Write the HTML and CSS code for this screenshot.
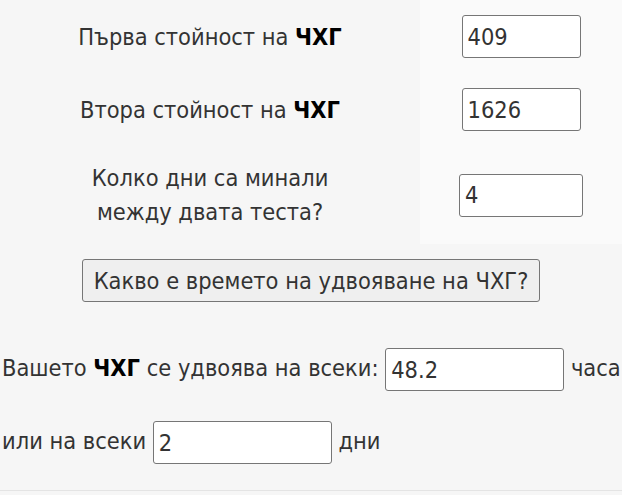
FILE: index.html
```html
<!DOCTYPE html>
<html lang="bg">
<head>
  <meta charset="UTF-8" />
  <title>Време на удвояване на ЧХГ</title>
  <link rel="stylesheet" href="styles.css">
</head>
<body>
  <div class="calc">
    <table class="inputs">
      <tr>
        <td class="label">Първа стойност на <b>ЧХГ</b></td>
        <td class="field"><input type="text" class="num" value="409"></td>
      </tr>
      <tr>
        <td class="label">Втора стойност на <b>ЧХГ</b></td>
        <td class="field"><input type="text" class="num" value="1626"></td>
      </tr>
      <tr>
        <td class="label">Колко дни са минали<br>между двата теста?</td>
        <td class="field"><input type="text" class="num wide" value="4"></td>
      </tr>
    </table>

    <div class="action">
      <button type="button">Какво е времето на удвояване на ЧХГ?</button>
    </div>

    <div class="result">
      <p>Вашето <b>ЧХГ</b> се удвоява на всеки: <input type="text" class="out" value="48.2"> часа</p>
      <p>или на всеки <input type="text" class="out" value="2"> дни</p>
    </div>
  </div>
</body>
</html>
```

FILE: styles.css
```css
body {
  margin: 0;
  background: #f6f6f6;
  font-family: 'DejaVu Sans Condensed', 'DejaVu Sans', sans-serif;
  font-size: 23.4px;
  color: #333;
}

.calc {
  border-bottom: 1px solid #e4e4e4;
  padding-bottom: 12px;
}

.inputs {
  width: 622px;
  border-collapse: collapse;
}

.inputs td {
  padding: 15px 0;
  line-height: 34px;
}

.label {
  width: 420px;
  text-align: center;
}

.field {
  background: #fafafa;
  text-align: center;
}

b {
  color: #000;
}

input {
  font-family: inherit;
  font-size: 23.4px;
  color: #333;
  height: 43px;
  box-sizing: border-box;
  padding: 0 5px;
  border: 1px solid #767676;
  border-radius: 3px;
  background: #fff;
  vertical-align: middle;
}

.num {
  width: 119px;
}

.num.wide {
  width: 124px;
}

.action {
  text-align: center;
  margin-top: 15px;
}

button {
  font-family: inherit;
  font-size: 23.4px;
  color: #333;
  height: 43px;
  padding: 0 11px;
  background: #efefef;
  border: 1px solid #767676;
  border-radius: 3px;
}

.result p {
  margin: 0;
  padding-left: 2px;
  line-height: 73px;
}

.result p:first-child {
  margin-top: 30px;
}

.out {
  width: 179px;
}
```
